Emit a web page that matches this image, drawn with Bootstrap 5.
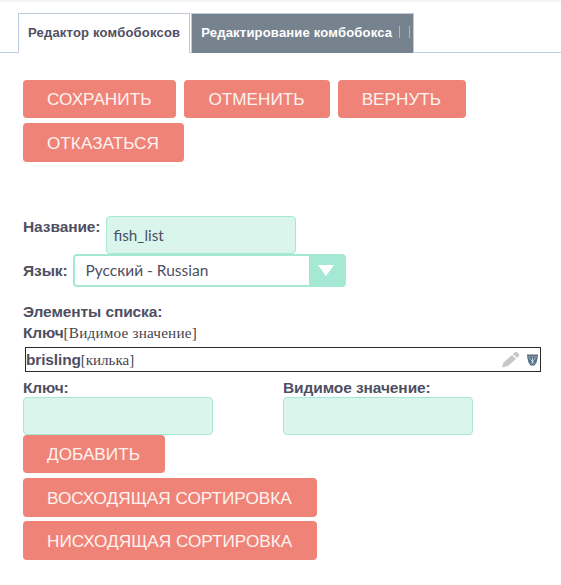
<!DOCTYPE html>
<html lang="ru"><head><meta charset="utf-8"><title>Редактор</title>
<link rel="stylesheet" href="https://cdn.jsdelivr.net/npm/bootstrap@5.3.0/dist/css/bootstrap.min.css">
<style>
html,body{background:#fff;overflow:hidden}
body{font-family:"Liberation Sans",sans-serif;color:#4f4f63;border-top:2px solid #f3f3f3;height:585px}
.tabbar{padding:11px 0 0 18px;border-bottom:1px solid #bfcbd9;height:51px;gap:1px;flex-wrap:nowrap}
.tabbar .nav-link{height:40px;border:1px solid #bfcbd9;border-bottom:0;border-radius:0;font-weight:700;font-size:13px;letter-spacing:.2px;line-height:38px;padding:0 9px;color:#4f4f63;background:#fff;white-space:nowrap}
.tabbar .nav-link.tab-off{background:#76838f;color:#fff;padding-right:3px}
.tab-sep{display:inline-block;width:1px;height:12px;background:#aeb8c1;margin-left:7px;vertical-align:-1px}
.tab-sep + .tab-sep{margin-left:9px}
.page-wrap{padding:27px 0 0 23px}
.coral{background:#f08377;border:0;border-radius:4px;color:#fdf3f1;font-family:"Liberation Sans",sans-serif;font-size:17.2px;height:38px;padding:0 25px 0 24px;line-height:38px;white-space:nowrap}
.coral:hover{background:#f08377;color:#fdf3f1}
.tall{height:39px}
.act-row{gap:5px 8px;width:480px}
.lbl{font-weight:700;font-size:15.5px;margin:0;letter-spacing:-.1px}
.mint{background:#d9f5ec;border:1px solid #a5e8d3;border-radius:4px;color:#4f4f63;font-family:Lato,sans-serif;font-size:15.3px;height:38px;width:190px;padding:0 7px}
.mint:focus{background:#d9f5ec;border-color:#a5e8d3;box-shadow:none}
.name-row{margin-top:54px;gap:6px;height:38px}
.name-row .mint{padding:0 6px}
.name-lbl{line-height:22px}
.lang-row{gap:5px;height:33px}
.lang-box{width:273px;height:33px;border:2px solid #a5e8d3;border-radius:4px;font-family:Lato,sans-serif;font-size:15.5px}
.lang-val{padding-left:11px;line-height:29px;flex:1}
.lang-arrow{width:35px;background:#a5e8d3}
.head-row{margin-top:16px;line-height:17px}
.key-head{margin-top:3px;line-height:20px}
.serif{font-family:"Liberation Serif",serif;font-weight:400;font-size:15.2px;letter-spacing:.2px;color:#45454f}
.item-row{width:516px;height:25px;margin:4px 0 0 2px;border:1px solid #2b2b2b;line-height:23px}
.item-row .lbl{letter-spacing:-.15px}
.item-row .serif{font-size:15px;letter-spacing:0}
.two-col{width:450px;gap:70px;margin-top:6px}
.two-col .lbl{line-height:19px}
.stack{gap:5px}
.stack .coral:last-child{margin-top:-1px}
.tool-icons{gap:5px;padding-right:1px}
</style></head><body>
<ul class="nav tabbar d-flex">
<li class="nav-item"><a class="nav-link" href="#">Редактор комбобоксов</a></li>
<li class="nav-item"><a class="nav-link tab-off" href="#">Редактирование комбобокса<span class="tab-sep"></span><span class="tab-sep"></span></a></li>
</ul>
<main class="page-wrap">
<div class="d-flex flex-wrap act-row">
<button class="btn coral">СОХРАНИТЬ</button><button class="btn coral">ОТМЕНИТЬ</button><button class="btn coral">ВЕРНУТЬ</button><button class="btn coral tall">ОТКАЗАТЬСЯ</button>
</div>
<div class="d-flex name-row"><label class="lbl name-lbl">Название:</label><input class="form-control mint" value="fish_list"></div>
<div class="d-flex align-items-center lang-row"><label class="lbl">Язык:</label>
<div class="d-flex lang-box"><span class="lang-val">Русский - Russian</span><span class="lang-arrow d-flex align-items-center justify-content-center"><svg width="16" height="11" viewBox="0 0 16 11"><path d="M0 0H16L8 11Z" fill="#fff"/></svg></span></div></div>
<p class="lbl head-row">Элементы списка:</p>
<p class="lbl key-head">Ключ<span class="serif">[Видимое значение]</span></p>
<div class="d-flex align-items-center item-row"><span class="lbl">brisling<span class="serif">[килька]</span></span>
<span class="ms-auto d-flex align-items-center tool-icons">
<svg width="20" height="17" viewBox="0 0 20 17"><path d="M1 16.500l1.500-5L11 4l4 4-8 7z" fill="#c6c8c8"/><path d="M12 3l2-2q1-.5 2 0l2 2q.5 1 0 2l-2 2z" fill="#c6c8c8"/></svg>
<svg width="13" height="13" viewBox="0 0 13 13"><path d="M1 1.500h11v2H1z" fill="#5f6b78"/><path d="M1 3.500h11l-1.500 6-2 3h-4l-2-3z" fill="#55708a"/><path d="M3 4.500l5 6M10 4.500l-5 6M6.500 4.500v6" stroke="#d8dde2" stroke-width=".8"/></svg></span></div>
<div class="d-flex two-col">
<div><label class="lbl d-block">Ключ:</label><input class="form-control mint"></div>
<div><label class="lbl d-block">Видимое значение:</label><input class="form-control mint"></div>
</div>
<div class="d-flex flex-column align-items-start stack">
<button class="btn coral">ДОБАВИТЬ</button>
<button class="btn coral tall">ВОСХОДЯЩАЯ СОРТИРОВКА</button>
<button class="btn coral tall">НИСХОДЯЩАЯ СОРТИРОВКА</button>
</div>
</main>
<script src="https://cdn.jsdelivr.net/npm/bootstrap@5.3.0/dist/js/bootstrap.bundle.min.js"></script>
</body></html>
